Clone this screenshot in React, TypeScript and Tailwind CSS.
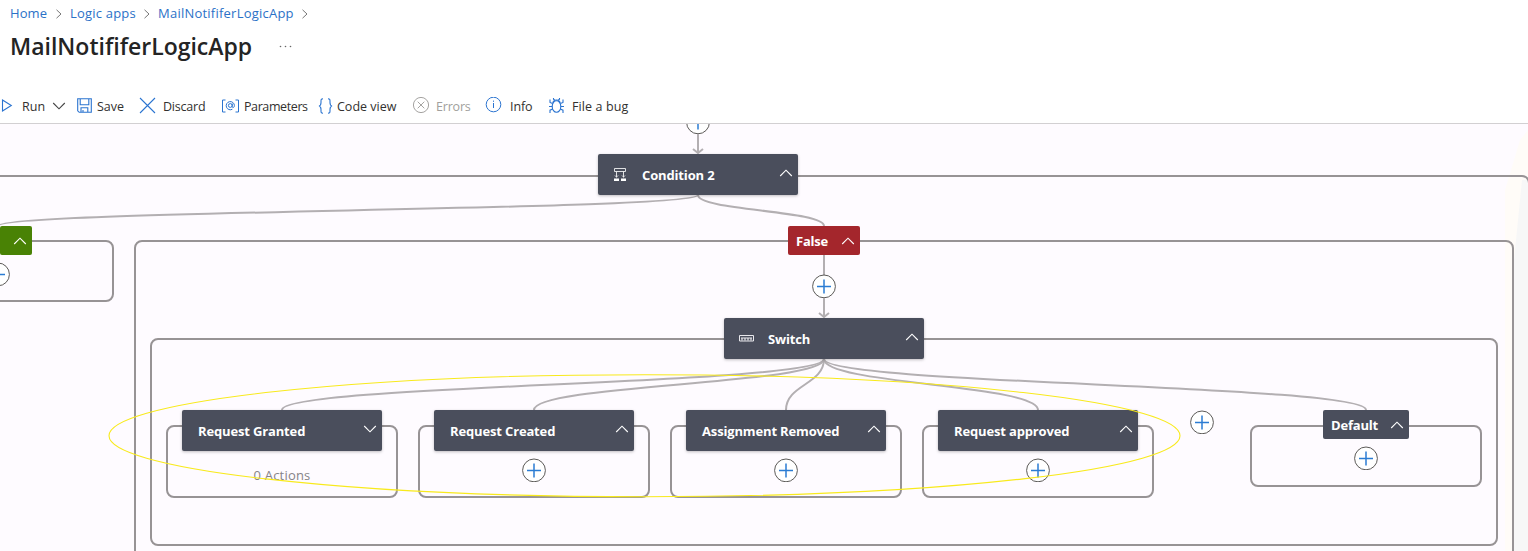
import React from "react";

const ChevronIcon = ({ className = "", down = false }: { className?: string; down?: boolean }) => (
  <svg className={className} width="14" height="8" viewBox="0 0 14 8" fill="none" stroke="currentColor" strokeWidth="1.1">
    <path d={down ? "M1.200 1l5.800 5.800L12.800 1" : "M1.200 7L7 1.200 12.800 7"} />
  </svg>
);

const CrumbArrow = ({ className = "" }: { className?: string }) => (
  <svg className={`shrink-0 text-[#777] ${className}`} width="6" height="10" viewBox="0 0 6 10" fill="none" stroke="currentColor">
    <path d="M.5 .8L5 5 .5 9.2" />
  </svg>
);

function Header() {
  return (
    <header className="flex h-[88px] flex-col">
      <nav className="flex h-[27px] items-center pl-[10px] text-[13px] text-[#2b71c7]">
        <span className="w-[46px] tracking-[0.1px] whitespace-nowrap">Home</span>
        <CrumbArrow />
        <span className="ml-[8px] w-[74px] tracking-[0.2px] whitespace-nowrap">Logic apps</span>
        <CrumbArrow />
        <span className="ml-[8px] w-[144px] tracking-[0.230px] whitespace-nowrap">MailNotififerLogicApp</span>
        <CrumbArrow />
      </nav>
      <div className="flex h-[39px] items-center pl-[10px]">
        <h1 className="w-[269px] text-[23px] font-semibold whitespace-nowrap text-[#242424]">MailNotififerLogicApp</h1>
        <svg width="13" height="3" viewBox="0 0 13 3" fill="#666">
          <circle cx="1.5" cy="1.5" r=".8" />
          <circle cx="6.5" cy="1.5" r=".8" />
          <circle cx="11.5" cy="1.5" r=".8" />
        </svg>
      </div>
    </header>
  );
}

const icon = "shrink-0 text-[#2b74d0]";

function Toolbar() {
  return (
    <div className="flex h-9 items-center border-b border-[#d2d0d2] text-[12.5px] whitespace-nowrap text-[#323130]">
      <svg className={icon} width="14" height="14" viewBox="0 0 14 14" fill="none" stroke="currentColor" strokeWidth="1.1">
        <path d="M2.500 1L11.300 6.500l-8.800 5.500z" />
      </svg>
      <span className="ml-[8px] w-[30px] pt-[3px]">Run</span>
      <ChevronIcon down className="text-[#444]" />
      <svg className={`ml-[11px] ${icon}`} width="15" height="15" viewBox="0 0 15 15" fill="none" stroke="currentColor" strokeWidth="1.1">
        <path d="M.7 .7h13.600v13.600H2.200L.7 12.800zM3.200 .7v6h8.600v-6M4 14.300V9.800h6.800v4.500M6 14.300v-2.300" />
      </svg>
      <span className="ml-[5px] w-[42px] pt-[3px]">Save</span>
      <svg className={icon} width="17" height="17" viewBox="0 0 17 17" fill="none" stroke="currentColor" strokeWidth="1.1">
        <path d="M1 1l15 15M16 1L1 16" />
      </svg>
      <span className="ml-[7px] w-[58px] pt-[3px] -tracking-[0.2px]">Discard</span>
      <svg className={icon} width="19" height="14" viewBox="0 0 19 14" fill="none" stroke="currentColor" strokeWidth="1">
        <path d="M4.500 1H1.500v12h3M14.500 1h3v12h-3" />
        <circle cx="9.300" cy="6.500" r="1.900" />
        <path d="M11.200 4.500v3c0 1.600 2.200 1.400 2.200-.9a4.100 4.100 0 1 0-2 3.600" />
      </svg>
      <span className="ml-[4px] w-[74px] pt-[3px] -tracking-[0.4px]">Parameters</span>
      <svg className={icon} width="15" height="16" viewBox="0 0 15 16" fill="none" stroke="currentColor" strokeWidth="1.100">
        <path d="M5 .8C2.800.8 3 2 3 4c0 2 .2 3.500-2 4 2.200.5 2 2 2 4 0 2-.2 3.200 2 3.200M10 .8c2.200 0 2 1.200 2 3.200 0 2-.2 3.500 2 4-2.200.5-2 2-2 4 0 2 .2 3.200-2 3.200" />
      </svg>
      <span className="ml-[4px] w-[76px] pt-[3px]">Code view</span>
      <svg className="shrink-0 text-[#a5a3a1]" width="17" height="17" viewBox="0 0 17 17" fill="none" stroke="currentColor">
        <circle cx="8" cy="8" r="7.600" />
        <path d="M4.700 4.700l6.600 6.600M11.300 4.700l-6.600 6.600" />
      </svg>
      <span className="ml-[6px] w-[49px] pt-[3px] -tracking-[0.2px] text-[#a19f9d]">Errors</span>
      <svg className={icon} width="17" height="17" viewBox="0 0 17 17" fill="none" stroke="currentColor">
        <circle cx="8.500" cy="7.500" r="7.300" />
        <path d="M8.500 6v5M8.500 3.600v1.200" />
      </svg>
      <span className="ml-[8px] w-[38px] pt-[3px] -tracking-[0.1px]">Info</span>
      <svg className={icon} width="17" height="17" viewBox="0 0 17 17" fill="none" stroke="currentColor" strokeWidth="1.100">
        <ellipse cx="8.500" cy="9.500" rx="4.300" ry="5.800" />
        <path d="M5 6C5 3.500 6.500 3 8.500 3S12 3.500 12 6M5.500 1v1.200l1.500 1M11.500 1v1.200l-1.500 1M4.500 6.500L2 5.500V2.500M12.500 6.500L15 5.500V2.500M4.200 9.500H1M12.800 9.500H16M4.700 12L2 13.200V16M12.300 12l2.700 1.200V16" />
      </svg>
      <span className="ml-[7px] pt-[3px] tracking-[0.1px]">File a bug</span>
    </div>
  );
}

const frame = "rounded-[8px] border-2 border-[#979395]";

const Group = ({ className }: { className: string }) => <div className={`absolute ${frame} ${className}`} />;

const AddButton = ({ className }: { className: string }) => (
  <button className={`h-6 w-6 ${className}`} aria-label="Add">
    <svg width="24" height="24" viewBox="0 0 24 24" fill="none">
      <circle cx="12" cy="12.400" r="11.400" fill="#fff" stroke="#5c5a58" />
      <path d="M5 12.500h14M12 5.500v14" stroke="#2b7cd3" strokeWidth="1.500" />
    </svg>
  </button>
);

function Node({ label, className = "", icon, down = false }: { label: string; className?: string; icon?: React.ReactNode; down?: boolean }) {
  return (
    <div className={`flex h-[41px] w-[200px] shrink-0 items-center rounded-[2px] bg-[#4a4e5c] pr-[5px] text-white shadow-[0_1px_3px_rgba(0,0,0,0.25)] ${className}`}>
      {icon ? <span className="flex w-11 justify-center">{icon}</span> : <span className="w-4" />}
      <span className="flex-1 pt-[2px] text-[13px] font-bold -tracking-[0.150px] whitespace-nowrap">{label}</span>
      <ChevronIcon down={down} className="mb-[3px]" />
    </div>
  );
}

function Badge({ label, className }: { label?: string; className: string }) {
  return (
    <div className={`flex h-[29px] shrink-0 items-center justify-between rounded-[2px] pr-[5px] pl-2 text-[13px] font-bold -tracking-[0.2px] text-white ${className}`}>
      <span className="pt-[2px]">{label}</span>
      <ChevronIcon />
    </div>
  );
}

function Branch({ className, children }: { className: string; children: React.ReactNode }) {
  return <section className={`flex w-[232px] flex-col items-center ${frame} ${className}`}>{children}</section>;
}

const ConditionIcon = () => (
  <svg width="12" height="13" viewBox="0 0 12 13" fill="none" stroke="#f0f0f2" strokeWidth=".9">
    <path d="M.5 .5h11v3H.5zM2.500 3.500v6M9.500 3.500v6M1 7.500l1.500 1.500L4 7.500M8 7.500l1.500 1.500L11 7.500" />
    <path d="M0 10.500h5V13H0zM7 10.500h5V13H7z" fill="#fff" stroke="none" />
  </svg>
);

const SwitchIcon = () => (
  <svg width="15" height="7" viewBox="0 0 15 7" fill="none" stroke="#e8e8ec">
    <path d="M.5 .5h14v5.500H.5z" />
    <path d="M3 3v2.500M6 3v2.500M9 3v2.500M12 3v2.500M2 3h11" strokeWidth="1.200" />
  </svg>
);

const Edges = () => (
  <svg className="absolute inset-0" width="1528" height="427" viewBox="0 124 1528 427" fill="none" stroke="#b3afb2" strokeWidth="2">
    <path d="M698 133v19M693 149l5 4 5-4" />
    <path d="M824 255v61M819 313l5 4 5-4" />
    <path d="M698 195C698 210.500-2 210.500-2 226" />
    <path d="M698 195C698 210.500 824 210.500 824 226" />
    <path d="M824 359C824 384.500 282 384.500 282 410" />
    <path d="M824 359C824 384.500 534 384.500 534 410" />
    <path d="M824 359C824 384.500 786 384.500 786 410" />
    <path d="M824 359C824 384.500 1038 384.500 1038 410" />
    <path d="M824 359C824 384.500 1366 384.500 1366 410" />
  </svg>
);

function Canvas() {
  return (
    <main className="relative h-[427px] overflow-hidden bg-[#fefbff]">
      <svg className="absolute inset-0" width="1528" height="427" viewBox="0 124 1528 427">
        <path d="M1520 140l8-10v50l-10 60v311h-13V190z" fill="#fffcf8" />
        <path d="M1522 180h6v371h-14V260z" fill="#f7f7f7" />
      </svg>
      <Group className="top-[51px] -left-5 h-[500px] w-[1550px]" />
      <Group className="top-[116px] -left-24 h-[62px] w-[210px]" />
      <Group className="top-[116px] left-[134px] h-[400px] w-[1380px]" />
      <Group className="top-[214px] left-[150px] h-[208px] w-[1348px]" />
      <Edges />

      <AddButton className="absolute -top-[14px] left-[686px]" />
      <Node label="Condition 2" icon={<ConditionIcon />} className="absolute top-[30px] left-[598px]" />
      <Badge className="absolute top-[102px] left-0 w-8 bg-[#498205]" />
      <AddButton className="absolute top-[138px] -left-[14px]" />
      <Badge label="False" className="absolute top-[102px] left-[788px] w-[72px] bg-[#a4262c]" />
      <AddButton className="absolute top-[150px] left-[812px]" />
      <Node label="Switch" icon={<SwitchIcon />} className="absolute top-[194px] left-[724px]" />

      <div className="absolute top-[301px] left-[166px] flex items-start">
        <div className="flex gap-5">
          <Branch className="h-[73px]">
            <Node label="Request Granted" down className="-mt-[17px]" />
            <p className="mt-[15px] text-[13px] leading-[18px] tracking-[0.2px] text-[#868387]">0 Actions</p>
          </Branch>
          <Branch className="h-[73px]">
            <Node label="Request Created" className="-mt-[17px]" />
            <AddButton className="mt-[7px]" />
          </Branch>
          <Branch className="h-[73px]">
            <Node label="Assignment Removed" className="-mt-[17px]" />
            <AddButton className="mt-[7px]" />
          </Branch>
          <Branch className="h-[73px]">
            <Node label="Request approved" className="-mt-[17px]" />
            <AddButton className="mt-[7px]" />
          </Branch>
        </div>
        <AddButton className="mx-9 -mt-[15px]" />
        <Branch className="h-[62px]">
          <Badge label="Default" className="-mt-[17px] w-[86px] bg-[#4a4e5c]" />
          <AddButton className="mt-[7px]" />
        </Branch>
      </div>

      <svg className="pointer-events-none absolute inset-0" width="1528" height="427" viewBox="0 124 1528 427" fill="none">
        <ellipse cx="644.500" cy="435.700" rx="535.500" ry="61" stroke="#f8ea1c" strokeWidth="1.100" />
      </svg>
    </main>
  );
}

export default function App() {
  return (
    <div className="h-[551px] w-[1528px] overflow-hidden bg-white font-['Open_Sans','Noto_Sans',sans-serif]">
      <Header />
      <Toolbar />
      <Canvas />
    </div>
  );
}
